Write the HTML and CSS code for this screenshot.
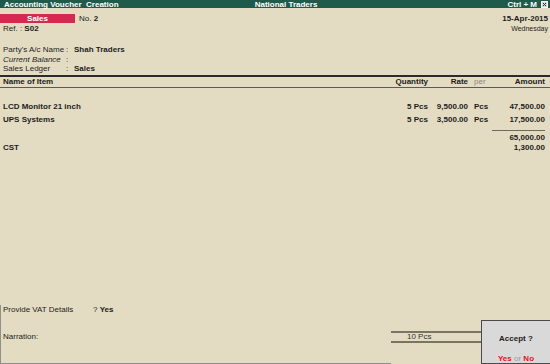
FILE: index.html
```html
<!DOCTYPE html>
<html lang="en">

<head>
    <meta charset="UTF-8">
    <meta name="viewport" content="width=device-width, initial-scale=1.0">
    <title>Accounting Voucher Creation</title>
    <link rel="stylesheet" href="styles.css">
</head>

<body>
    <div class="screen">
        <!-- title bar -->
        <div class="titlebar">
            <span class="tb-left">Accounting Voucher&nbsp; Creation</span>
            <span class="tb-center">National Traders</span>
            <span class="tb-right">Ctrl + M
                <svg class="close" width="7" height="7" viewBox="0 0 7 7">
                    <rect x="0.5" y="0.5" width="6" height="6" fill="#d8d8d8" stroke="#f4f4f4" />
                    <path d="M2 2 L5 5 M5 2 L2 5" stroke="#333" stroke-width="1" />
                </svg>
            </span>
        </div>

        <!-- voucher head -->
        <div class="vhead">
            <div class="vhead-left">
                <div class="vtype-row">
                    <span class="vtype">Sales</span>
                    <span class="vno">No. <b>2</b></span>
                </div>
                <div class="ref">Ref. : <b>S02</b></div>
            </div>
            <div class="vhead-right">
                <div class="date">15-Apr-2015</div>
                <div class="day">Wednesday</div>
            </div>
        </div>

        <div class="party">
            <div class="prow"><span>Party's A/c Name</span><span>:</span><b>Shah Traders</b></div>
            <div class="prow short"><i>Current Balance</i><span>:</span><span></span></div>
            <div class="prow"><span>Sales Ledger</span><span>:</span><b>Sales</b></div>
        </div>

        <!-- items -->
        <div class="items">
            <div class="irow ihead">
                <b>Name of Item</b>
                <b class="num">Quantity</b>
                <b class="num">Rate</b>
                <span class="per-h">per</span>
                <b class="num">Amount</b>
            </div>
            <div class="irow first">
                <b>LCD Monitor 21 inch</b>
                <b class="num">5 Pcs</b>
                <b class="num">9,500.00</b>
                <b class="per">Pcs</b>
                <b class="num">47,500.00</b>
            </div>
            <div class="irow">
                <b>UPS Systems</b>
                <b class="num">5 Pcs</b>
                <b class="num">3,500.00</b>
                <b class="per">Pcs</b>
                <b class="num">17,500.00</b>
            </div>
            <div class="irow total">
                <span></span><span></span><span></span><span></span>
                <b class="num sum">65,000.00</b>
            </div>
            <div class="irow">
                <b>CST</b>
                <span></span><span></span><span></span>
                <b class="num">1,300.00</b>
            </div>
        </div>

        <div class="spacer"></div>

        <!-- footer -->
        <div class="footer">
            <div class="foot-left">
                <div class="vat"><span class="vat-label">Provide VAT Details</span>? <b>Yes</b></div>
                <div class="narration">Narration:</div>
            </div>
            <div class="qty-total">10 Pcs</div>
            <div class="accept">
                <b class="accept-q">Accept ?</b>
                <div class="accept-opts"><b class="red">Yes</b> <span class="or">or</span> <b class="red">No</b></div>
            </div>
        </div>
    </div>
</body>

</html>
```

FILE: styles.css
```css
* {
    margin: 0;
    padding: 0;
    box-sizing: border-box;
}

body {
    width: 550px;
    height: 364px;
    background-color: #e4dcc2;
    font-family: "Liberation Sans", Arial, sans-serif;
    font-size: 8px;
    color: #1c1c1c;
    overflow: hidden;
}

.screen {
    height: 364px;
    display: flex;
    flex-direction: column;
}

/* Title bar */
.titlebar {
    height: 8px;
    line-height: 9px;
    background-color: #1f5a4b;
    color: #ffffff;
    font-weight: bold;
    display: grid;
    grid-template-columns: 1fr auto 1fr;
    padding: 0 2px 0 4px;
}

.tb-center {
    padding-left: 20px;
}

.tb-right {
    text-align: right;
    display: flex;
    justify-content: flex-end;
    align-items: center;
    gap: 4px;
    height: 8px;
}

.close {
    display: block;
}

/* Voucher head */
.vhead {
    display: flex;
    justify-content: space-between;
    margin-top: 5px;
    padding-right: 2px;
}

.vtype-row {
    display: flex;
    align-items: center;
    height: 10px;
}

.vtype {
    width: 75px;
    height: 9px;
    line-height: 9px;
    background-color: #d42a51;
    color: #ffffff;
    font-weight: bold;
    text-align: center;
    margin-right: 4px;
}

.ref {
    margin-top: 1px;
    height: 10px;
    line-height: 10px;
    padding-left: 3px;
}

.date {
    height: 10px;
    line-height: 12px;
    font-weight: bold;
    text-align: right;
}

.day {
    font-size: 7px;
    line-height: 9px;
    text-align: right;
    margin-top: 1px;
}

/* Party details */
.party {
    margin-top: 11px;
    padding-left: 3px;
}

.prow {
    display: grid;
    grid-template-columns: 63px 8px auto;
    height: 10px;
    line-height: 10px;
}

.prow.short {
    height: 9px;
}

/* Item table */
.items {
    margin-top: 1px;
}

.irow {
    display: grid;
    grid-template-columns: 1fr 60px 40px 24px 53px;
    height: 13px;
    line-height: 10px;
    padding: 0 5px 0 3px;
}

.ihead {
    height: 13px;
    border-top: 2px solid #2b2b2b;
    border-bottom: 1px solid #5a5a5a;
    margin-bottom: 14px;
}

.num {
    text-align: right;
}

.per-h {
    color: #8a8578;
    padding-left: 6px;
}

.per {
    padding-left: 6px;
}

.total {
    margin-top: 2px;
}

.sum {
    border-top: 1px solid #6e6a5c;
    padding-top: 2px;
}

.spacer {
    flex: 1;
}

/* Footer */
.footer {
    height: 59px;
    display: flex;
    align-items: flex-start;
}

.foot-left {
    flex: 1;
    height: 59px;
    border-left: 1px solid #8f8f8f;
    border-bottom: 1px solid #8f8f8f;
    padding-left: 2px;
}

.vat {
    height: 10px;
    line-height: 10px;
}

.vat-label {
    display: inline-block;
    width: 90px;
}

.narration {
    margin-top: 17px;
    line-height: 10px;
}

.qty-total {
    width: 90px;
    height: 12px;
    margin-top: 26px;
    border-top: 2px solid #7a7562;
    border-bottom: 2px solid #7a7562;
    line-height: 8px;
    padding-left: 16px;
    color: #333;
}

.accept {
    width: 69px;
    height: 44px;
    margin-top: 15px;
    background-color: #d9d9d9;
    border: 1px solid #4a4a4a;
    border-right: none;
    text-align: center;
    display: flex;
    flex-direction: column;
}

.accept-q {
    margin-top: 13px;
    line-height: 10px;
}

.accept-opts {
    margin-top: 10px;
    line-height: 10px;
}

.red {
    color: #e8101a;
}

.or {
    color: #9a9a9a;
}
```
